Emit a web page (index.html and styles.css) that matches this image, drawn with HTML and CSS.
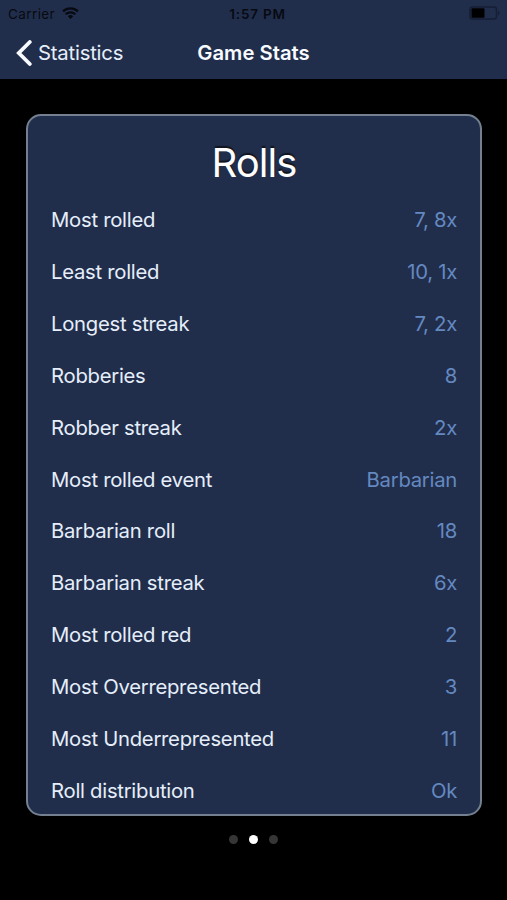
FILE: index.html
```
<!DOCTYPE html>
<html lang="en">
<head>
  <meta charset="UTF-8">
  <title>Game Stats</title>

  <link rel="stylesheet" href="styles.css">
</head>

<body>
  <header class="top">
    <div class="status">
      <div class="carrier">
        <span>Carrier</span>
        <svg class="wifi" viewBox="0 0 17 12" width="17" height="12">
          <path d="M1 4.4a11 11 0 0 1 15 0M3.6 7.2a7.2 7.2 0 0 1 9.8 0" fill="none" stroke="#070a12" stroke-width="2.2"/>
          <path d="M8.5 12L5.8 9.2a4 4 0 0 1 5.4 0z" fill="#070a12"/>
        </svg>
      </div>
      <span class="time">1:57 PM</span>
      <svg class="battery" viewBox="0 0 31 14" width="31" height="14">
        <rect x="1" y="1" width="26.5" height="12" rx="2.5" fill="none" stroke="#151e34" stroke-width="1.6"/>
        <path d="M29 4.5v5q1.6-.8 1.6-2.5T29 4.5z" fill="#151e34"/>
        <rect x="2.5" y="2.3" width="13" height="9.4" rx="1" fill="#000"/>
      </svg>
    </div>
    <nav class="nav">
      <a class="back">
        <svg viewBox="0 0 16 26" width="16" height="26">
          <path d="M13.8 2L2.8 13l11 11" fill="none" stroke="#f7faff" stroke-width="3.8" stroke-linecap="round"/>
        </svg>
        <span>Statistics</span>
      </a>
      <h1>Game Stats</h1>
    </nav>
  </header>

  <main class="card">
    <h2>Rolls</h2>
    <dl class="stats">
      <div class="row"><dt>Most rolled</dt><dd>7, 8x</dd></div>
      <div class="row"><dt>Least rolled</dt><dd>10, 1x</dd></div>
      <div class="row"><dt>Longest streak</dt><dd>7, 2x</dd></div>
      <div class="row"><dt>Robberies</dt><dd>8</dd></div>
      <div class="row"><dt>Robber streak</dt><dd>2x</dd></div>
      <div class="row"><dt>Most rolled event</dt><dd>Barbarian</dd></div>
      <div class="row"><dt>Barbarian roll</dt><dd>18</dd></div>
      <div class="row"><dt>Barbarian streak</dt><dd>6x</dd></div>
      <div class="row"><dt>Most rolled red</dt><dd>2</dd></div>
      <div class="row"><dt>Most Overrepresented</dt><dd>3</dd></div>
      <div class="row"><dt>Most Underrepresented</dt><dd>11</dd></div>
      <div class="row"><dt>Roll distribution</dt><dd>Ok</dd></div>
    </dl>
  </main>

  <div class="dots">
    <span class="dot"></span>
    <span class="dot active"></span>
    <span class="dot"></span>
  </div>
</body>
</html>
```
FILE: styles.css
```
* {
  margin: 0;
  padding: 0;
  box-sizing: border-box;
}

:root {
  --navy: #212e4b;
  --text: #e6eefb;
  --value: #6489c1;
}

body {
  height: 900px;
  overflow: hidden;
  background: #000;
  color: var(--text);
  font-family: Inter, 'Liberation Sans', sans-serif;
  font-size: 20.3px;
  letter-spacing: -0.27px;
}

.top {
  height: 79px;
  background: var(--navy);
}

.status {
  height: 27px;
  padding: 0 7px 0 8px;
  display: grid;
  grid-template-columns: 1fr auto 1fr;
  align-items: center;
  color: #070a12;
  font-size: 13.5px;
  letter-spacing: 0.4px;
}

.carrier {
  display: flex;
  align-items: center;
  gap: 7px;
}

.wifi {
  margin-bottom: 2px;
}

.time {
  padding-left: 7px;
  font-weight: 600;
  letter-spacing: 0.8px;
}

.battery {
  justify-self: end;
  margin-bottom: 2px;
}

.nav {
  height: 51px;
  padding: 0 16px;
  display: grid;
  grid-template-columns: 1fr auto 1fr;
  align-items: center;
}

.back {
  display: flex;
  align-items: center;
  gap: 6px;
  letter-spacing: -0.2px;
}

h1 {
  color: #f7faff;
  font-size: 20.3px;
  font-weight: 600;
  letter-spacing: 0;
}

.card {
  width: 456px;
  height: 702px;
  margin: 35px 0 0 26px;
  padding: 0 23px;
  overflow: hidden;
  background: var(--navy);
  border: 2px solid #74808f;
  border-radius: 15px;
}

h2 {
  height: 77.7px;
  padding-top: 22px;
  color: #fff;
  font-size: 40px;
  font-weight: 400;
  line-height: 50px;
  letter-spacing: -0.9px;
  text-align: center;
  text-shadow: 0 -2px 1px #10151f;
}

.row {
  height: 51.9px;
  display: flex;
  justify-content: space-between;
  align-items: center;
}

dd {
  color: var(--value);
}

.dots {
  margin-top: 19px;
  display: flex;
  justify-content: center;
  gap: 11px;
}

.dot {
  width: 9px;
  height: 9px;
  border-radius: 50%;
  background: #363636;
}

.active {
  background: #fff;
}
```
